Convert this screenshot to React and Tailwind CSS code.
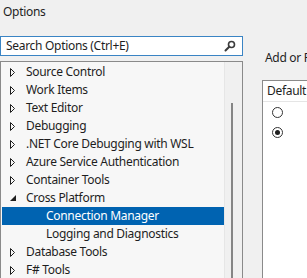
import React from 'react';

const items = [
  { label: 'Source Control', state: 'closed' },
  { label: 'Work Items', state: 'closed' },
  { label: 'Text Editor', state: 'closed' },
  { label: 'Debugging', state: 'closed' },
  { label: '.NET Core Debugging with WSL', state: 'closed' },
  { label: 'Azure Service Authentication', state: 'closed' },
  { label: 'Container Tools', state: 'closed' },
  { label: 'Cross Platform', state: 'open' },
  { label: 'Connection Manager', child: true, selected: true },
  { label: 'Logging and Diagnostics', child: true },
  { label: 'Database Tools', state: 'closed' },
  { label: 'F# Tools', state: 'closed' },
];

const Arrow = ({ state }) => {
  if (state === 'open') {
    return (
      <svg width="6" height="6" viewBox="0 0 6 6" className="block">
        <polygon points="6,0 6,6 0,6" fill="#1e1e1e" />
      </svg>
    );
  }
  return (
    <svg width="6" height="9" viewBox="0 0 6 9" className="block">
      <polygon points="0.5,0.5 4.5,4.5 0.5,8.5" fill="none" stroke="#1e1e1e" strokeWidth="1" />
    </svg>
  );
};

const Radio = ({ checked }) => (
  <div className="w-[11px] h-[11px] rounded-full border border-[#333] bg-white flex items-center justify-center">
    {checked && <div className="w-[5px] h-[5px] rounded-full bg-[#1e1e1e]" />}
  </div>
);

export default function App() {
  return (
    <div
      className="w-[307px] h-[278px] overflow-hidden bg-[#f0f0f0] text-[12px] leading-[16px] tracking-[-0.3px] text-[#1e1e1e]"
      style={{ fontFamily: '"Segoe UI", "Noto Sans", sans-serif' }}
    >
      <div className="h-[36px] pl-[3px] pt-[4px]">Options</div>

      <div className="flex">
        {/* Left: search + tree */}
        <div className="w-[243px] shrink-0">
          <div className="h-[20px] border border-[#3a84c4] bg-white flex items-center pl-[5px] pr-[6px]">
            <span className="flex-1 whitespace-nowrap">Search Options (Ctrl+E)</span>
            <svg width="12" height="12" viewBox="0 0 12 12">
              <circle cx="7.5" cy="4.5" r="3" fill="none" stroke="#3c3c3c" strokeWidth="1.6" />
              <line x1="5.3" y1="6.7" x2="1.5" y2="10.5" stroke="#3c3c3c" strokeWidth="2" strokeLinecap="round" />
            </svg>
          </div>

          <div className="mt-[5px] h-[300px] border border-[#8a8a8a] bg-[#f7f7f7] flex">
            <div className="flex-1 pt-[1px] pl-[1px] overflow-hidden">
              {items.map((item) => (
                <div
                  key={item.label}
                  className={`h-[18px] flex items-center whitespace-nowrap ${
                    item.selected ? 'bg-[#0063b1] text-white' : ''
                  }`}
                >
                  {item.child ? (
                    <span className="pl-[44px]">{item.label}</span>
                  ) : (
                    <>
                      <span className="w-[24px] flex justify-center ml-[-1px] shrink-0">
                        <Arrow state={item.state} />
                      </span>
                      <span className="pl-[1px]">{item.label}</span>
                    </>
                  )}
                </div>
              ))}
            </div>
            <div className="w-[18px] border-l border-[#e6e6e6] bg-[#f0f0f0] pt-[41px] pl-[6px]">
              <div className="w-[2px] h-full bg-[#858585]" />
            </div>
          </div>
        </div>

        {/* Right: connections */}
        <div className="flex-1 min-w-0 overflow-hidden">
          <div className="pl-[22px] pt-[14px] h-[44px] whitespace-nowrap">Add or Remove Connections</div>
          <div className="ml-[19px] border border-[#8a8a8a] bg-white h-[300px] w-[200px]">
            <div className="h-[21px] pl-[4px] flex items-center border-b border-[#e5e5e5]">Default</div>
            <div className="h-[20px] pl-[9px] flex items-center">
              <Radio />
            </div>
            <div className="h-[20px] pl-[9px] flex items-center">
              <Radio checked />
            </div>
          </div>
        </div>
      </div>
    </div>
  );
}
